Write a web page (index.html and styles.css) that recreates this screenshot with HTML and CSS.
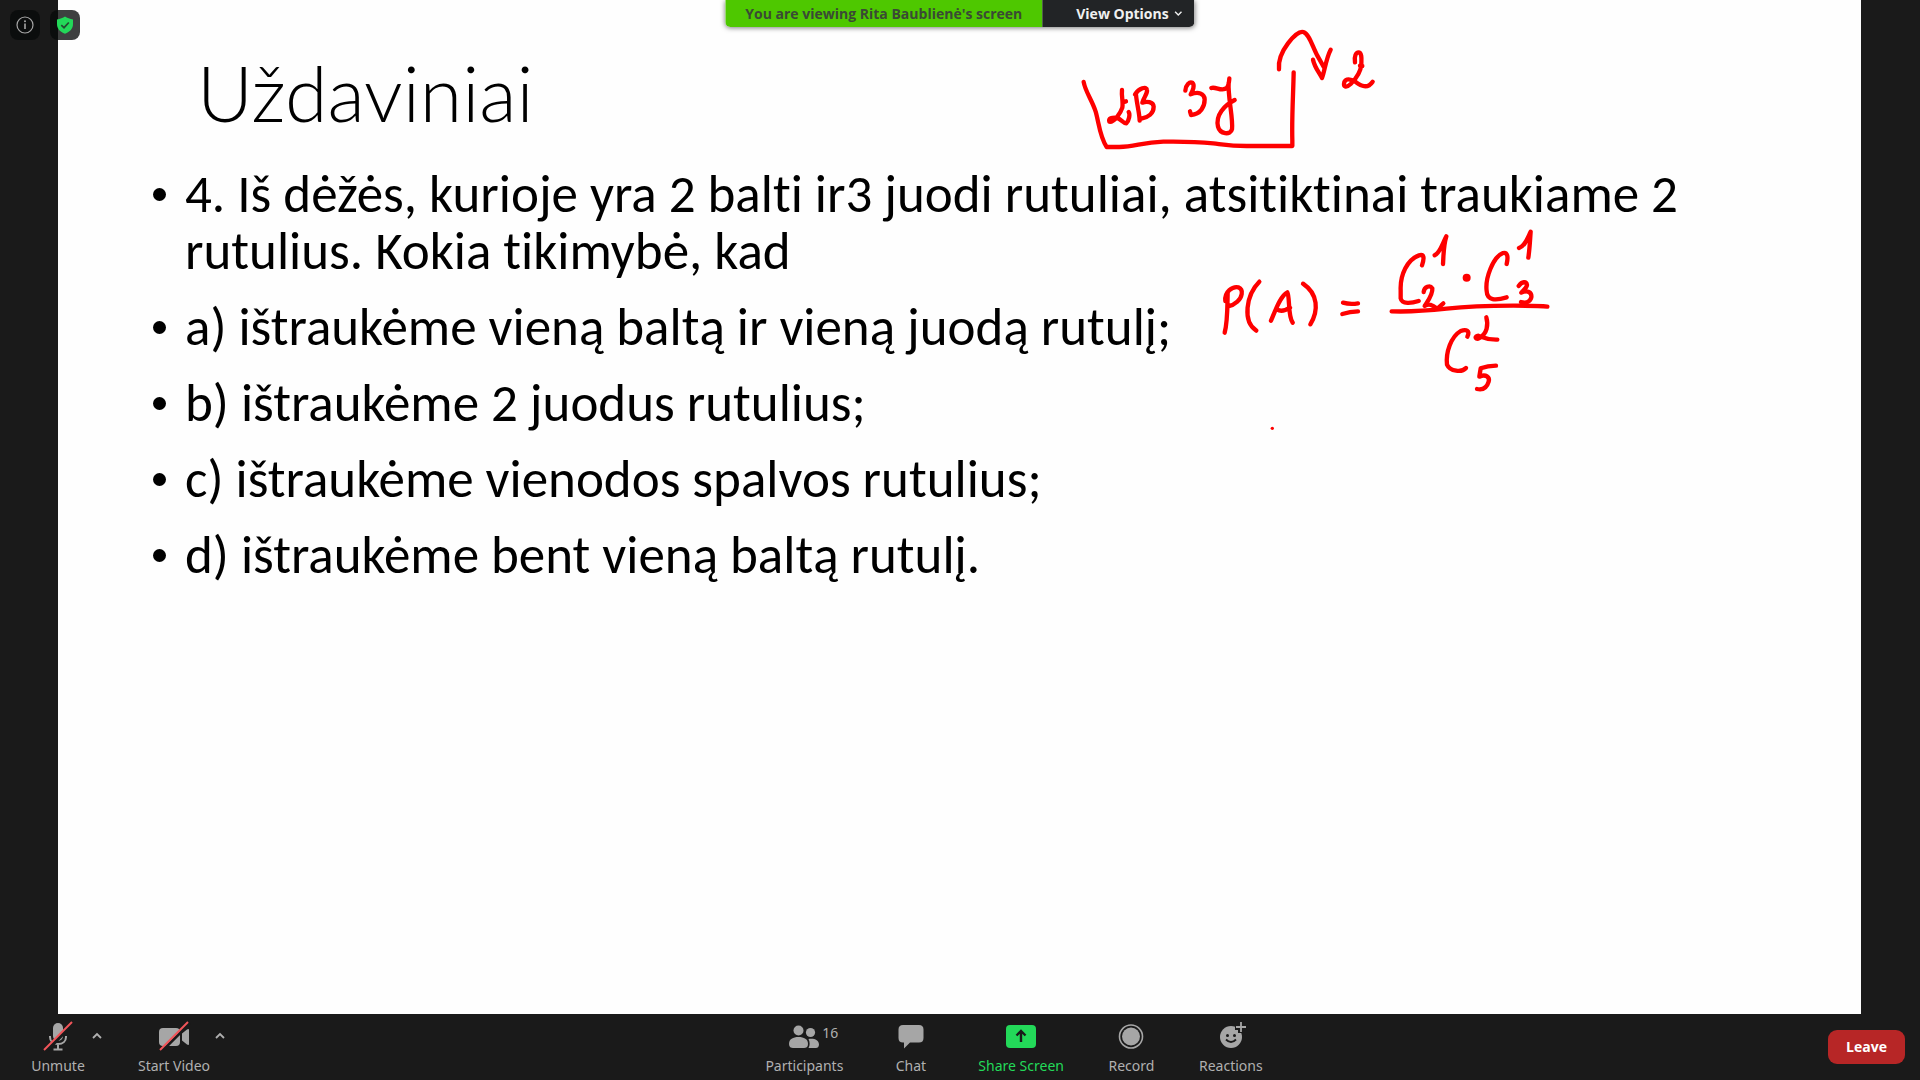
FILE: index.html
```html
<!DOCTYPE html>
<html lang="lt">
<head>
<meta charset="utf-8">
<meta name="viewport" content="width=device-width, initial-scale=1">
<title>Uždaviniai</title>
<link rel="stylesheet" href="styles.css">
</head>
<body>
<main class="stage">
  <article class="slide">
    <h1 class="slide-title">Uždaviniai</h1>
    <ul class="task-list">
      <li>4. Iš dėžės, kurioje yra 2 balti ir3 juodi rutuliai, atsitiktinai traukiame 2 rutulius. Kokia tikimybė, kad</li>
      <li>a) ištraukėme vieną baltą ir vieną juodą rutulį;</li>
      <li>b) ištraukėme 2 juodus rutulius;</li>
      <li>c) ištraukėme vienodos spalvos rutulius;</li>
      <li>d) ištraukėme bent vieną baltą rutulį.</li>
    </ul>
    <svg class="ink ink-box" viewBox="0 0 1020 480" aria-hidden="true">
      <path d="M71 216C76 245 96 270 107 305C116 335 119 380 140 411H178C225 411 245 397 310 395C375 394 420 396 460 400C500 405 515 408 560 408H697V390C695 320 700 250 701 187"/>
      <path d="M657 178C654 150 665 125 684 100C702 76 720 63 730 66C748 72 756 107 772 137L793 174M759 149C764 172 776 185 786 204C794 184 798 145 812 119"/>
      <path d="M885 157C882 138 888 127 896 127C907 129 904 150 904 163C902 188 887 207 872 222C858 235 849 230 853 216C858 205 872 207 886 215C904 228 922 238 938 215M900 167L907 168"/>
      <path d="M186 240C184 258 190 277 187 293C182 309 162 338 148 335C145 325 155 322 170 323C183 327 190 341 199 340C207 332 211 313 206 306M188 277L198 274"/>
      <path d="M228 254C230 280 238 307 239 332M225 253C237 235 260 227 261 240C263 252 250 263 247 278C260 273 280 275 281 290C281 310 265 322 244 326"/>
      <path d="M376 242C377 224 389 214 397 218C405 225 399 242 392 253C415 244 433 250 434 268C434 290 422 313 393 315L390 304"/>
      <path d="M454 234C467 229 486 246 500 234C507 226 507 216 508 205M506 218C503 260 520 325 516 358C512 376 480 373 474 350C466 315 493 286 524 270"/>
    </svg>
    <svg class="ink ink-formula" viewBox="0 0 1110 660" aria-hidden="true">
      <path d="M83 219C82 260 83 305 74 338M76 243C73 215 98 198 115 202C133 209 125 234 112 245C104 252 94 257 87 258"/>
      <path d="M178 185C138 225 127 305 169 332"/>
      <path d="M213 302C225 275 240 228 262 217C270 230 263 288 278 308M231 268C242 276 256 272 270 263"/>
      <path d="M309 191C355 222 356 272 331 313"/>
      <path d="M429 248Q450 254 474 250M427 282Q450 275 474 274"/>
      <path d="M666 136C674 112 672 102 657 106C622 118 600 165 602 210V235C606 254 635 250 656 243"/>
      <path d="M704 106C721 98 727 71 739 49C730 78 731 103 729 132"/>
      <path d="M671 216C673 200 690 194 697 205C699 225 681 247 674 258C687 250 696 254 712 266L730 250"/>
      <circle class="ink-dot" cx="800" cy="173" r="12"/>
      <path d="M920 132C925 111 923 96 909 99C879 111 855 175 860 213C861 242 887 242 920 232"/>
      <path d="M957 84C976 77 983 54 992 35C990 61 989 87 985 113"/>
      <path d="M956 198C966 184 979 183 981 195C980 205 968 212 964 218C982 209 996 217 994 232C990 246 977 250 963 246"/>
      <path d="M575 274C635 276 685 272 740 266C820 257 885 257 940 257C985 257 1015 257 1042 260"/>
      <path d="M802 350C811 332 799 327 782 333C753 350 737 397 741 434C750 455 786 458 798 444"/>
      <path d="M859 292C865 313 863 342 835 356C825 358 823 348 835 347C849 352 860 360 892 359"/>
      <path d="M888 437C870 437 855 440 842 445L838 470C858 461 870 472 866 485C861 502 850 511 831 507"/>
      <circle class="ink-dot" cx="217" cy="625" r="5"/>
    </svg>
  </article>
</main>

<div class="status">
  <button class="status-button" type="button" aria-label="Meeting information">
    <svg width="18" height="18" viewBox="0 0 18 18"><circle cx="9" cy="9" r="8" fill="none" stroke="#a6a6a6" stroke-width="1.2"/><circle cx="9" cy="5.2" r="1" fill="#a6a6a6"/><path d="M9 7.6V13" stroke="#a6a6a6" stroke-width="1.6"/></svg>
  </button>
  <button class="status-button" type="button" aria-label="Encryption">
    <svg width="18" height="18" viewBox="0 0 18 18"><path d="M9 .5C11 2 14 3 17 3.4V8C17 12.500 14 16 9 17.700C4 16 1 12.500 1 8V3.400C4 3 7 2 9 .5Z" fill="#23d959"/><path d="M5.300 9.200L8 11.700L12.800 6.500" fill="none" stroke="#244a30" stroke-width="1.700"/></svg>
  </button>
</div>

<div class="share-banner">
  <span class="share-name">You are viewing Rita Baublienė's screen</span>
  <button class="view-options" type="button">View Options
    <svg width="8" height="5" viewBox="0 0 8 5"><path d="M.8 .8L4 4L7.200 .8" fill="none" stroke="currentColor" stroke-width="1.400"/></svg>
  </button>
</div>

<footer class="toolbar">
  <div class="media-controls">
    <button class="tool tool-audio" type="button">
      <svg class="tool-icon" width="30" height="30" viewBox="0 0 30 30">
        <rect x="10" y="2" width="10" height="18" rx="5" fill="#a6a6a6"/>
        <path d="M7 15V16C7 20 10 23 15 23S23 20 23 16V15M15 23V28M10.500 28.500H19.500" fill="none" stroke="#a6a6a6" stroke-width="2"/>
        <path d="M3 30L30 2" stroke="#1a1a1a" stroke-width="4"/>
        <path d="M1 29L29 1" stroke="#f2555a" stroke-width="2"/>
      </svg>
      <span>Unmute</span>
    </button>
    <button class="more" type="button" aria-label="Audio options"><svg width="10" height="6" viewBox="0 0 10 6"><path d="M1 5L5 1L9 5" fill="none" stroke="currentColor" stroke-width="1.800"/></svg></button>
    <button class="tool tool-video" type="button">
      <svg class="tool-icon" width="30" height="30" viewBox="0 0 30 30">
        <rect x="0" y="7" width="21" height="18" rx="4" fill="#a6a6a6"/>
        <path d="M23 12.500L28 8.500Q30 7.500 30 9V23Q30 24.500 28 23.500L23 19.500Z" fill="#a6a6a6"/>
        <path d="M3 30L31 2" stroke="#1a1a1a" stroke-width="3"/>
        <path d="M1 29L29 1" stroke="#f2555a" stroke-width="2"/>
      </svg>
      <span>Start Video</span>
    </button>
    <button class="more" type="button" aria-label="Video options"><svg width="10" height="6" viewBox="0 0 10 6"><path d="M1 5L5 1L9 5" fill="none" stroke="currentColor" stroke-width="1.800"/></svg></button>
  </div>
  <div class="meeting-controls">
    <button class="tool" type="button">
      <span class="icon-wrap">
        <svg class="tool-icon" width="30" height="30" viewBox="0 0 30 30" fill="#a6a6a6">
          <circle cx="9.500" cy="9.500" r="5"/><circle cx="21.500" cy="11.500" r="4.600"/>
          <path d="M0 23C0 18 4 16 9.500 16S19 18 19 23C19 26 17 27 15 27H4C2 27 0 26 0 23Z"/>
          <path d="M19.500 18C25 17 30 19 30 23.500C30 26 28.500 27 27 27H19.500C21 25 21 20.500 19.500 18Z"/>
        </svg>
        <span class="count">16</span>
      </span>
      <span>Participants</span>
    </button>
    <button class="tool" type="button">
      <svg class="tool-icon" width="30" height="30" viewBox="0 0 30 30"><path d="M7 4H23Q27.500 4 27.500 8.500V17Q27.500 21.500 23 21.500H14L8 27.500V21.500H7Q2.500 21.500 2.500 17V8.500Q2.500 4 7 4Z" fill="#a6a6a6"/></svg>
      <span>Chat</span>
    </button>
    <button class="tool tool-share" type="button">
      <svg class="tool-icon" width="30" height="30" viewBox="0 0 30 30"><rect y="4" width="30" height="23" rx="4" fill="#23d959"/><path d="M15 21V11M10.500 14.500L15 10L19.500 14.500" fill="none" stroke="#1a1a1a" stroke-width="2.400"/></svg>
      <span>Share Screen</span>
    </button>
    <button class="tool" type="button">
      <svg class="tool-icon" width="30" height="30" viewBox="0 0 30 30"><circle cx="15" cy="15.500" r="11.500" fill="none" stroke="#a6a6a6" stroke-width="1.600"/><circle cx="15" cy="15.500" r="9" fill="#a6a6a6"/></svg>
      <span>Record</span>
    </button>
    <button class="tool" type="button">
      <svg class="tool-icon" width="30" height="30" viewBox="0 0 30 30">
        <circle cx="15" cy="16" r="11" fill="#a6a6a6"/>
        <path d="M25 0V12M19 6H31" stroke="#1a1a1a" stroke-width="6"/>
        <path d="M25 1V11M20 6H30" stroke="#a6a6a6" stroke-width="1.800"/>
        <circle cx="11.500" cy="14.500" r="1.500" fill="#1a1a1a"/><circle cx="18.500" cy="14.500" r="1.500" fill="#1a1a1a"/>
        <path d="M10 18.500Q15 23.500 20 18.500" fill="none" stroke="#1a1a1a" stroke-width="1.800"/>
      </svg>
      <span>Reactions</span>
    </button>
  </div>
  <button class="leave" type="button">Leave</button>
</footer>
</body>
</html>
```
FILE: styles.css
```css
* {
  box-sizing: border-box;
}

body {
  margin: 0;
  min-height: 100vh;
  display: flex;
  flex-direction: column;
  position: relative;
  background: #1a1a1a;
  font-family: "Open Sans", "Noto Sans", sans-serif;
}

button {
  margin: 0;
  padding: 0;
  border: 0;
  background: none;
  color: inherit;
  font: inherit;
}

svg {
  display: block;
  overflow: visible;
}

/* Shared screen */
.stage {
  flex: 1;
  display: flex;
  padding: 0 59px 0 58px;
}

.slide {
  flex: 1;
  position: relative;
  padding: 44px 124px 50px 127px;
  background: #fefefe;
  color: #000;
  font-family: Carlito, Calibri, Lato, sans-serif;
  font-variant-ligatures: none;
}

.slide-title {
  margin: 0 0 26px;
  padding-left: 12px;
  font-family: Lato, sans-serif;
  font-size: 77px;
  font-weight: 300;
  line-height: 96px;
}

.task-list {
  display: flex;
  flex-direction: column;
  gap: 19px;
  margin: 0;
  padding: 0;
  list-style: none;
  font-size: 53px;
  line-height: 57px;
}

.task-list li {
  position: relative;
}

.task-list li::before {
  content: "";
  position: absolute;
  top: 22px;
  left: -32px;
  width: 13px;
  height: 13px;
  border-radius: 50%;
  background: #000;
}

/* Pen annotations drawn over the slide */
.ink {
  position: absolute;
  fill: none;
  stroke: #fe0000;
  stroke-width: 13;
  stroke-linecap: round;
  stroke-linejoin: round;
}

.ink-box {
  top: 10px;
  left: 1002px;
  width: 340px;
  height: 160px;
}

.ink-formula {
  top: 220px;
  left: 1142px;
  width: 370px;
  height: 220px;
}

.ink-dot {
  fill: #fe0000;
  stroke: none;
}

/* Floating controls */
.status {
  position: absolute;
  top: 10px;
  left: 10px;
  display: flex;
  gap: 10px;
}

.status-button {
  display: grid;
  place-items: center;
  width: 30px;
  height: 30px;
  border-radius: 8px;
  background: rgba(8, 10, 10, 0.78);
}

.share-banner {
  position: absolute;
  top: 0;
  left: 50%;
  transform: translateX(-50%);
  display: flex;
  height: 27px;
  border-radius: 0 0 5px 5px;
  overflow: hidden;
  box-shadow: 0 1px 5px rgba(0, 0, 0, 0.5);
  font-size: 14px;
  font-weight: 700;
  line-height: 27px;
  white-space: nowrap;
}

.share-name {
  padding: 0 20px;
  background: #4ec800;
  color: #3a4a35;
}

.view-options {
  display: flex;
  align-items: center;
  gap: 6px;
  padding: 0 12px 0 34px;
  background: #222426;
  color: #f0f0f0;
}

/* Meeting toolbar */
.toolbar {
  display: flex;
  align-items: stretch;
  height: 66px;
  padding-right: 15px;
  color: #b0b0b0;
  font-family: "Noto Sans", sans-serif;
  font-size: 14px;
  line-height: 20px;
}

.media-controls,
.meeting-controls {
  display: flex;
}

.meeting-controls {
  flex: 1;
  justify-content: center;
  padding-right: 28px;
}

.tool {
  display: flex;
  flex-direction: column;
  align-items: center;
  gap: 5px;
  min-width: 93px;
  padding: 7px 21px 0;
  white-space: nowrap;
}

.tool-audio {
  min-width: 84px;
  margin-left: 16px;
  padding: 7px 0 0;
}

.tool-video {
  min-width: 98px;
  margin-left: 20px;
  padding: 7px 0 0;
}

.more {
  display: flex;
  justify-content: center;
  width: 16px;
  padding-top: 19px;
  margin-left: -11px;
}

.icon-wrap {
  position: relative;
}

.count {
  position: absolute;
  top: 2px;
  left: 33px;
}

.tool-share {
  color: #23d959;
}

.leave {
  align-self: center;
  width: 77px;
  height: 34px;
  border-radius: 9px;
  background: #b72626;
  color: #fff;
  font-family: "Open Sans", sans-serif;
  font-weight: 700;
}
```
